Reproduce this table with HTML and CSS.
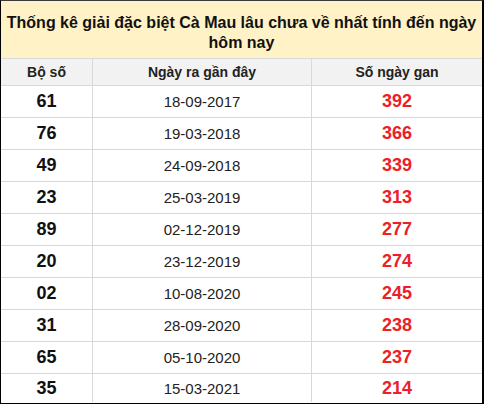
FILE: index.html
```html
<!DOCTYPE html>
<html lang="vi">
<head>
<meta charset="utf-8">
<title>Thống kê giải đặc biệt Cà Mau</title>
<link rel="stylesheet" href="styles.css">
</head>
<body>
<div class="box">
  <div class="title">Thống kê giải đặc biệt Cà Mau lâu chưa về nhất tính đến ngày hôm nay</div>
  <table class="tbl">
    <thead>
      <tr><th class="c1">Bộ số</th><th class="c2">Ngày ra gần đây</th><th class="c3">Số ngày gan</th></tr>
    </thead>
    <tbody>
      <tr><td class="num">61</td><td class="date">18-09-2017</td><td class="gan">392</td></tr>
      <tr><td class="num">76</td><td class="date">19-03-2018</td><td class="gan">366</td></tr>
      <tr><td class="num">49</td><td class="date">24-09-2018</td><td class="gan">339</td></tr>
      <tr><td class="num">23</td><td class="date">25-03-2019</td><td class="gan">313</td></tr>
      <tr><td class="num">89</td><td class="date">02-12-2019</td><td class="gan">277</td></tr>
      <tr><td class="num">20</td><td class="date">23-12-2019</td><td class="gan">274</td></tr>
      <tr><td class="num">02</td><td class="date">10-08-2020</td><td class="gan">245</td></tr>
      <tr><td class="num">31</td><td class="date">28-09-2020</td><td class="gan">238</td></tr>
      <tr><td class="num">65</td><td class="date">05-10-2020</td><td class="gan">237</td></tr>
      <tr class="last"><td class="num">35</td><td class="date">15-03-2021</td><td class="gan">214</td></tr>
    </tbody>
  </table>
</div>
</body>
</html>
```
FILE: styles.css
```css
html, body {
  margin: 0;
  padding: 0;
  background: #fff;
}
.box {
  width: 484px;
  height: 404px;
  box-sizing: border-box;
  border-top: 1px solid #3a3a3a;
  border-left: 1px solid #000;
  border-right: 2px solid #000;
  border-bottom: 1px solid #000;
  overflow: hidden;
  font-family: "Liberation Sans", Arial, sans-serif;
}
.title {
  background: #fff2c6;
  height: 58px;
  box-sizing: border-box;
  padding: 12px 0 0;
  text-align: center;
  font-weight: bold;
  font-size: 16px;
  line-height: 20px;
  color: #111;
  border-bottom: 1px solid #d9d9d9;
}
.tbl {
  width: 100%;
  border-collapse: collapse;
  table-layout: fixed;
}
.tbl th, .tbl td {
  padding: 0;
  text-align: center;
  border-bottom: 1px solid #d9d9d9;
  border-right: 1px solid #d9d9d9;
}
.tbl th:last-child, .tbl td:last-child {
  border-right: none;
}
.tbl th {
  background: #f2f2f2;
  height: 26px;
  font-size: 14px;
  font-weight: bold;
  color: #222;
}
.c1 { width: 91px; }
.c2 { width: 218px; }
.tbl td {
  height: 31px;
}
.tbl .last td {
  height: 28px;
  border-bottom: none;
}
.num {
  font-weight: bold;
  font-size: 18px;
  color: #111;
}
.date {
  font-size: 15px;
  color: #222;
}
.gan {
  font-weight: bold;
  font-size: 18px;
  color: #ec2029;
}
```
